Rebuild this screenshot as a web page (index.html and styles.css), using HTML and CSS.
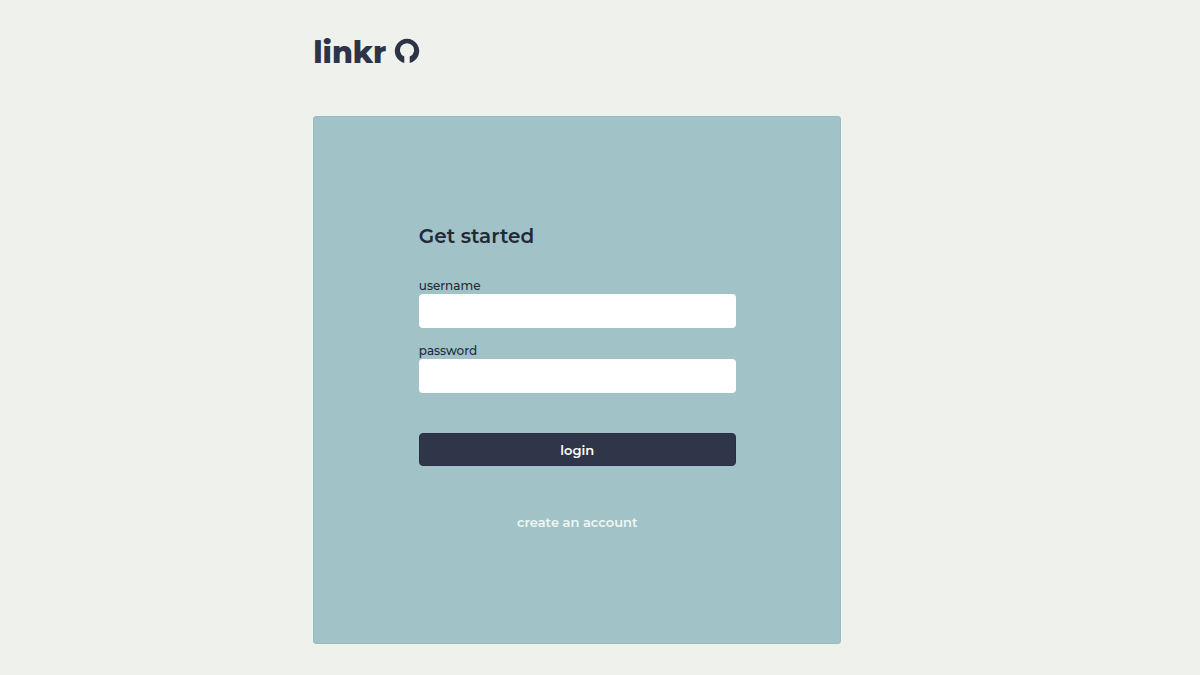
FILE: index.html
```html
<!DOCTYPE html>
<html lang="en">
<head>
<meta charset="utf-8">
<meta name="viewport" content="width=device-width, initial-scale=1">
<title>linkr</title>
<link rel="stylesheet" href="styles.css">
</head>
<body>
<div class="page">
  <header class="brand">
    <span class="brand-name">linkr</span>
    <svg class="brand-mark" viewBox="0 0 26 26" aria-hidden="true"><path d="M10.300 24.900A12.200 12.200 0 1 1 15.700 24.900V18.600A7 7 0 1 0 10.300 18.600Z" fill="currentColor"/></svg>
  </header>
  <main class="card">
    <form class="login">
      <h1 class="title">Get started</h1>
      <div class="field">
        <label class="label" for="username">username</label>
        <input class="input" id="username" type="text">
      </div>
      <div class="field">
        <label class="label" for="password">password</label>
        <input class="input" id="password" type="password">
      </div>
      <button class="submit" type="submit">login</button>
      <a class="create" href="#create">create an account</a>
    </form>
  </main>
</div>
</body>
</html>
```
FILE: styles.css
```css
* { box-sizing: border-box; }
body {
  margin: 0;
  background: #eff2ec;
  color: #22293b;
  font-family: Montserrat, Inter, sans-serif;
}
.page {
  width: 44%;
  margin-left: 26.1%;
  padding: 30px 0;
}
.brand {
  display: flex;
  align-items: flex-end;
  gap: 8px;
  height: 42px;
  color: #2e3447;
}
.brand-name {
  font-family: Montserrat, "Open Sans", sans-serif;
  font-size: 30px;
  font-weight: 800;
  line-height: 38px;
}
.brand-mark {
  align-self: center;
  width: 26px;
  height: 26px;
}
.card {
  display: grid;
  place-items: center;
  aspect-ratio: 1;
  margin-top: 44px;
  padding: 0 20%;
  background: #a1c3c7;
  box-shadow: inset 0 0 0 1px #98bdc1;
  border-radius: 4px;
}
.login {
  display: flex;
  flex-direction: column;
  width: 100%;
  padding-bottom: 6px;
}
.title {
  margin: 0 0 28px;
  font-size: 20px;
  font-weight: 600;
  line-height: 28px;
}
.field {
  display: flex;
  flex-direction: column;
  margin-bottom: 15px;
}
.label {
  font-size: 12px;
  font-weight: 500;
  line-height: 16px;
}
.input {
  width: 100%;
  height: 34px;
  padding: 0 8px;
  border: 0;
  border-radius: 4px;
  background: #fff;
  font: inherit;
}
.submit {
  height: 33px;
  margin-top: 25px;
  border: 1px solid #292f42;
  border-radius: 4px;
  background: #303649;
  color: #fff;
  font: 600 13px/20px Montserrat, Inter, sans-serif;
}
.create {
  align-self: center;
  margin-top: 46px;
  color: #eff6f3;
  font-size: 13px;
  font-weight: 600;
  line-height: 20px;
  text-decoration: none;
}
```
